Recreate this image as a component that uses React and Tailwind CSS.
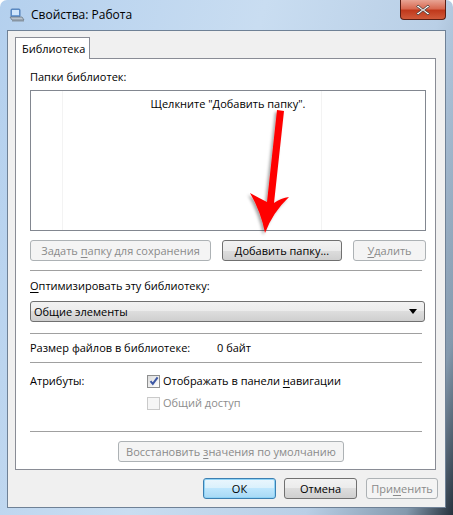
import React from "react";

const font = { fontFamily: '"Open Sans", "Noto Sans", sans-serif' };

const Btn = ({ children, disabled, primary, className = "" }) => {
  let look =
    "border-[#707070] text-black bg-[linear-gradient(#f2f2f2_0%,#ebebeb_50%,#dddddd_50%,#cfcfcf_100%)]";
  if (disabled) look = "border-[#adb2b5] text-[#8a8a8a] bg-[#f4f4f4]";
  if (primary)
    look =
      "border-[#3c7fb1] text-black bg-[linear-gradient(#eaf6fd_0%,#d9f0fc_50%,#bee6fd_50%,#a7d9f5_100%)] shadow-[inset_0_0_0_1px_#8fd3f6]";
  return (
    <div
      className={`h-[21px] flex items-center justify-center rounded-[3px] border text-[11px] leading-[16px] ${look} ${className}`}
    >
      <span className="whitespace-nowrap">{children}</span>
    </div>
  );
};

const Sep = ({ className = "" }) => (
  <div className={`h-px bg-[#a0a0a0] mr-[13px] ${className}`} />
);

const K = ({ children }) => <u className="underline-offset-[2px]">{children}</u>;

const LibIcon = () => (
  <svg width="16" height="16" viewBox="0 0 16 16">
    <rect x="2" y="2" width="9" height="8" rx="1" fill="#6f9fd8" stroke="#3d6da8" strokeWidth="0.8" />
    <rect x="3" y="3" width="7" height="5" fill="#cfe5fb" />
    <path d="M1 10h12l2 3H3z" fill="#b9c4cf" stroke="#6c7884" strokeWidth="0.8" />
    <path d="M3 13h12v1.5H3z" fill="#8895a2" />
  </svg>
);

export default function App() {
  return (
    <div
      style={font}
      className="relative w-[453px] h-[515px] overflow-hidden rounded-t-[7px] bg-[linear-gradient(105deg,#b4d0ee_0%,#c9ddf1_45%,#b9cfe6_75%,#8499ad_92%,#26313d_100%)] text-black"
    >
      {/* title bar */}
      <div className="h-[30px] flex items-center pl-[9px] gap-[6px]">
        <LibIcon />
        <span className="text-[12px] leading-[16px] text-black">Свойства: Работа</span>
      </div>
      <div className="absolute top-0 right-[7px] w-[46px] h-[20px] rounded-b-[4px] border border-t-0 border-[#5a1e14] bg-[linear-gradient(#e8a494_0%,#d86a52_45%,#c0391c_55%,#d05a3a_100%)] flex items-center justify-center">
        <svg width="14" height="12" viewBox="0 0 14 12">
          <path d="M2 1l5 4.2L12 1l1.5 1.5L8.6 6l4.9 3.5L12 11 7 6.8 2 11 .5 9.5 5.4 6 .5 2.5z" fill="#fff" stroke="#3a3a3a" strokeWidth="0.8" />
        </svg>
      </div>

      {/* client area */}
      <div className="mx-[7px] h-[478px] border border-[#6f8196] bg-[#f0f0f0] flex flex-col text-[11px] leading-[16px]">
        <div className="pt-[6px] pl-[7px] pr-[9px]">
          <div className="flex">
            <div className="w-[75px] h-[22px] border border-b-0 border-[#898c95] bg-white flex items-center pl-[6px] relative -mb-px z-10">
              Библиотека
            </div>
          </div>
          <div className="h-[412px] border border-[#898c95] bg-white pl-[14px] pt-[10px] flex flex-col">
            <div>Папки библиотек:</div>
            <div className="relative mt-[5px] mr-[9px] h-[141px] border border-[#828790] bg-white">
              <div className="absolute top-0 bottom-0 left-[31px] w-px bg-[#f3f3f3]" />
              <div className="absolute top-0 bottom-0 left-[290px] w-px bg-[#f3f3f3]" />
              <div className="relative text-center pt-[5px]">Щелкните "Добавить папку".</div>
            </div>
            <div className="flex mt-[9px] mr-[9px]">
              <Btn disabled className="w-[181px]">
                Задать <K>п</K>апку для сохранения
              </Btn>
              <Btn className="w-[120px] ml-[11px]">
                <K>Д</K>обавить папку...
              </Btn>
              <Btn disabled className="w-[73px] ml-[11px]">
                <K>У</K>далить
              </Btn>
            </div>
            <Sep className="mt-[9px]" />
            <div className="mt-[7px]">
              <K>О</K>птимизировать эту библиотеку:
            </div>
            <div className="mt-[7px] mr-[10px] h-[21px] rounded-[3px] border border-[#707070] bg-[linear-gradient(#f2f2f2_0%,#ebebeb_50%,#dddddd_50%,#cfcfcf_100%)] flex items-center pl-[3px] pr-[7px] justify-between">
              <span>Общие элементы</span>
              <svg width="8" height="5" viewBox="0 0 8 5">
                <path d="M0 0h8L4 5z" fill="#000" />
              </svg>
            </div>
            <Sep className="mt-[11px]" />
            <div className="mt-[6px] flex">
              <span className="w-[187px]">Размер файлов в библиотеке:</span>
              <span>0 байт</span>
            </div>
            <Sep className="mt-[6px]" />
            <div className="mt-[10px] flex items-center">
              <span className="w-[117px]">Атрибуты:</span>
              <div className="w-[13px] h-[13px] border border-[#8e8f8f] bg-[linear-gradient(135deg,#dcdcdc,#ffffff)] flex items-center justify-center mr-[3px]">
                <svg width="10" height="10" viewBox="0 0 10 10">
                  <path d="M1.5 5.2l2.3 2.6L8.6 1.4" fill="none" stroke="#3d58a5" strokeWidth="2" />
                </svg>
              </div>
              <span>
                Отображать в панели <K>н</K>авигации
              </span>
            </div>
            <div className="mt-[6px] flex items-center text-[#8d8d8d]">
              <span className="w-[117px]" />
              <div className="w-[13px] h-[13px] border border-[#cacaca] bg-[#f6f6f6] mr-[3px]" />
              <span>Общий доступ</span>
            </div>
            <Sep className="mt-[20px]" />
            <div className="mt-[9px] flex pl-[88px]">
              <Btn disabled className="w-[226px]">
                Восстановить <K>з</K>начения по умолчанию
              </Btn>
            </div>
          </div>
        </div>
        <div className="flex justify-end pr-[7px] pt-[8px]">
          <Btn primary className="w-[73px]">ОК</Btn>
          <Btn className="w-[73px] ml-[8px]">Отмена</Btn>
          <Btn disabled className="w-[72px] ml-[9px]">
            При<K>м</K>енить
          </Btn>
        </div>
      </div>

      {/* annotation arrow */}
      <svg className="absolute inset-0 pointer-events-none" width="453" height="515" viewBox="0 0 453 515">
        <defs>
          <filter id="sh" x="-20%" y="-20%" width="140%" height="140%">
            <feDropShadow dx="-2" dy="2" stdDeviation="1.5" floodColor="#000" floodOpacity="0.35" />
          </filter>
        </defs>
        <path
          d="M277 110 L284 111 L274 203 Q281 198 289 197 Q273 212 265 233 Q261 212 250 193 Q259 198 267 202 Z"
          fill="#ff0000"
          filter="url(#sh)"
        />
      </svg>
    </div>
  );
}
